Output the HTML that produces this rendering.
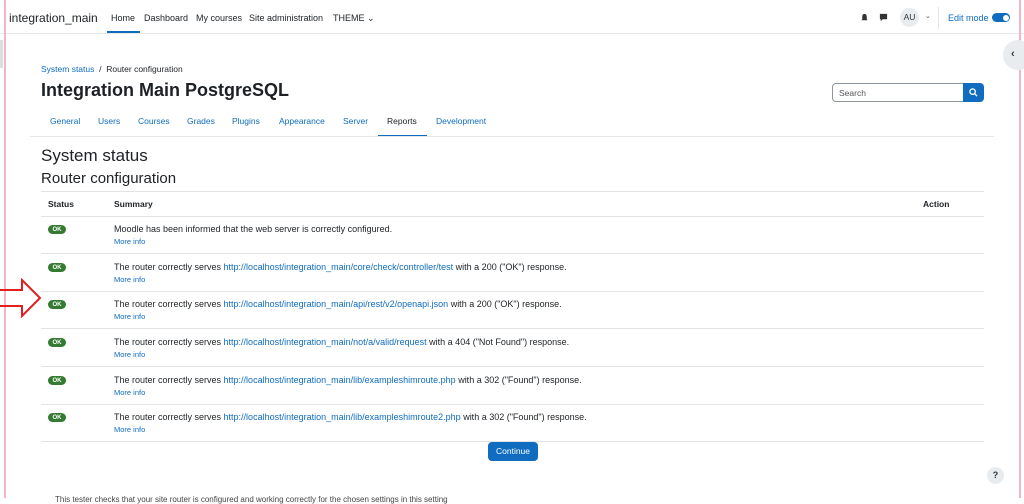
<!DOCTYPE html>
<html><head><meta charset="utf-8"><style>
*{box-sizing:border-box;margin:0;padding:0}
body{width:1024px;height:498px;overflow:hidden;background:#fff;font-family:"Liberation Sans",sans-serif;color:#1d2125;position:relative;font-size:8.5px}
a{color:#0f6cbf;text-decoration:none}
.abs{position:absolute;white-space:nowrap}
.nav{position:absolute;left:0;top:0;width:1024px;height:34px;border-bottom:1px solid #e8e8e8;background:#fff}
.pl{position:absolute;top:0;bottom:0;width:2px;background:#f5b3c8}
.ok{position:absolute;left:48px;width:18px;height:9px;border-radius:5px;background:#357a32;color:#fff;font-size:6px;font-weight:bold;display:flex;align-items:center;justify-content:center;line-height:1}
.line{position:absolute;left:41px;width:943px;height:1px;background:#e3e3e3}
.t{position:absolute;left:114px;font-size:9px}
.m{position:absolute;left:114px;font-size:7.5px;color:#0f6cbf}
</style></head><body>
<div class="nav">
<div class="abs" style="left:9px;top:11px;font-size:12px">integration_main</div>
<div class="abs" style="left:111px;top:13px;font-size:9px">Home</div>
<div class="abs" style="left:107px;top:31px;width:33px;height:2px;background:#0f6cbf"></div>
<div class="abs" style="left:144px;top:13px;font-size:9px">Dashboard</div>
<div class="abs" style="left:196px;top:13px;font-size:9px">My courses</div>
<div class="abs" style="left:249px;top:13px;font-size:9px">Site administration</div>
<div class="abs" style="left:333px;top:13px;font-size:9px">THEME ⌄</div>
<svg class="abs" style="left:860px;top:13px" width="9" height="9" viewBox="0 0 10 10"><path d="M5 1C3 1 2.5 3 2.5 4.5V7L1.5 8h7l-1-1V4.5C7.5 3 7 1 5 1z M4 9h2" fill="#333"/></svg>
<svg class="abs" style="left:879px;top:13px" width="9" height="9" viewBox="0 0 10 10"><path d="M1 1h8v6H4L2 9V7H1z" fill="#333"/></svg>
<div class="abs" style="left:900px;top:8px;width:19px;height:19px;border-radius:50%;background:#e9ecef;font-size:8.5px;text-align:center;line-height:19px;color:#333">AU</div>
<div class="abs" style="left:925px;top:12px;font-size:7px;color:#555">⌄</div>
<div class="abs" style="left:938px;top:7px;width:1px;height:22px;background:#e5e5e5"></div>
<div class="abs" style="left:948px;top:13px;font-size:9px;color:#0f6cbf">Edit mode</div>
<div class="abs" style="left:992px;top:13px;width:18px;height:9px;border-radius:5px;background:#0f6cbf"><div style="position:absolute;right:1.5px;top:1.5px;width:6px;height:6px;border-radius:50%;background:#fff"></div></div>
</div>
<div class="pl" style="left:4px"></div>
<div class="pl" style="left:1019px"></div>
<div class="abs" style="left:0;top:40px;width:3px;height:28px;background:#ddd"></div>
<div class="abs" style="left:1003px;top:40px;width:30px;height:30px;border-radius:50%;background:#e9ecef;font-size:11px;line-height:28px;padding-left:8px;color:#333;font-weight:bold">‹</div>
<div class="abs" style="left:41px;top:64px;font-size:8.5px"><a>System status</a> &nbsp;/&nbsp; Router configuration</div>
<div class="abs" style="left:41px;top:80px;font-size:18px;font-weight:bold">Integration Main PostgreSQL</div>
<div class="abs" style="left:832px;top:83px;width:132px;height:19px;border:1px solid #8f959e;border-radius:4px 0 0 4px;font-size:8.5px;color:#555;padding:4px 6px">Search</div>
<div class="abs" style="left:963px;top:83px;width:21px;height:19px;background:#0f6cbf;border-radius:0 4px 4px 0"><svg style="position:absolute;left:6px;top:5px" width="9" height="9" viewBox="0 0 10 10"><circle cx="4" cy="4" r="3" stroke="#fff" stroke-width="1.5" fill="none"/><path d="M6.3 6.3L9 9" stroke="#fff" stroke-width="1.5"/></svg></div>
<div class="abs" style="top:116px;left:50px;font-size:8.5px;color:#0f6cbf">
<span style="position:absolute;left:0">General</span><span style="position:absolute;left:48px">Users</span><span style="position:absolute;left:88px">Courses</span><span style="position:absolute;left:137px">Grades</span><span style="position:absolute;left:182px">Plugins</span><span style="position:absolute;left:229px">Appearance</span><span style="position:absolute;left:293px">Server</span><span style="position:absolute;left:337px;color:#1d2125">Reports</span><span style="position:absolute;left:386px">Development</span></div>
<div class="abs" style="left:378px;top:135px;width:49px;height:2px;background:#0f6cbf"></div>
<div class="abs" style="left:30px;top:136px;width:964px;height:1px;background:#e6e6e6"></div>
<div class="abs" style="left:41px;top:146px;font-size:17px">System status</div>
<div class="abs" style="left:41px;top:170px;font-size:15px">Router configuration</div>
<div class="line" style="top:191px"></div>
<div class="abs" style="left:48px;top:199px;font-weight:bold;font-size:8.5px">Status</div>
<div class="abs" style="left:114px;top:199px;font-weight:bold;font-size:8.5px">Summary</div>
<div class="abs" style="left:923px;top:199px;font-weight:bold;font-size:8.5px">Action</div>
<div class="line" style="top:216px"></div>
<div class="ok" style="top:225px">OK</div><div class="t" style="top:224px">Moodle has been informed that the web server is correctly configured.</div><div class="m" style="top:237px">More info</div>
<div class="line" style="top:253px"></div>
<div class="ok" style="top:263px">OK</div><div class="t" style="top:262px">The router correctly serves <a>http://localhost/integration_main/core/check/controller/test</a> with a 200 ("OK") response.</div><div class="m" style="top:275px">More info</div>
<div class="line" style="top:291px"></div>
<div class="ok" style="top:300px">OK</div><div class="t" style="top:299px">The router correctly serves <a>http://localhost/integration_main/api/rest/v2/openapi.json</a> with a 200 ("OK") response.</div><div class="m" style="top:312px">More info</div>
<div class="line" style="top:328px"></div>
<div class="ok" style="top:338px">OK</div><div class="t" style="top:337px">The router correctly serves <a>http://localhost/integration_main/not/a/valid/request</a> with a 404 ("Not Found") response.</div><div class="m" style="top:350px">More info</div>
<div class="line" style="top:366px"></div>
<div class="ok" style="top:376px">OK</div><div class="t" style="top:375px">The router correctly serves <a>http://localhost/integration_main/lib/exampleshimroute.php</a> with a 302 ("Found") response.</div><div class="m" style="top:388px">More info</div>
<div class="line" style="top:404px"></div>
<div class="ok" style="top:413px">OK</div><div class="t" style="top:412px">The router correctly serves <a>http://localhost/integration_main/lib/exampleshimroute2.php</a> with a 302 ("Found") response.</div><div class="m" style="top:425px">More info</div>
<div class="line" style="top:441px"></div>
<div class="abs" style="left:488px;top:442px;width:50px;height:19px;background:#0f6cbf;border-radius:4px;color:#fff;font-size:8.5px;text-align:center;line-height:19px">Continue</div>
<div class="abs" style="left:987px;top:467px;width:17px;height:17px;border-radius:50%;background:#e9ecef;font-size:9px;text-align:center;line-height:17px;font-weight:bold;color:#333">?</div>
<div class="abs" style="left:55px;top:495px;font-size:8px;color:#444">This tester checks that your site router is configured and working correctly for the chosen settings in this setting</div>
<svg class="abs" style="left:0;top:278px" width="42" height="40" viewBox="0 0 42 40"><path d="M0 12H22V2L40 20 22 38V28H0" fill="none" stroke="#e02020" stroke-width="2"/></svg>
</body></html>
